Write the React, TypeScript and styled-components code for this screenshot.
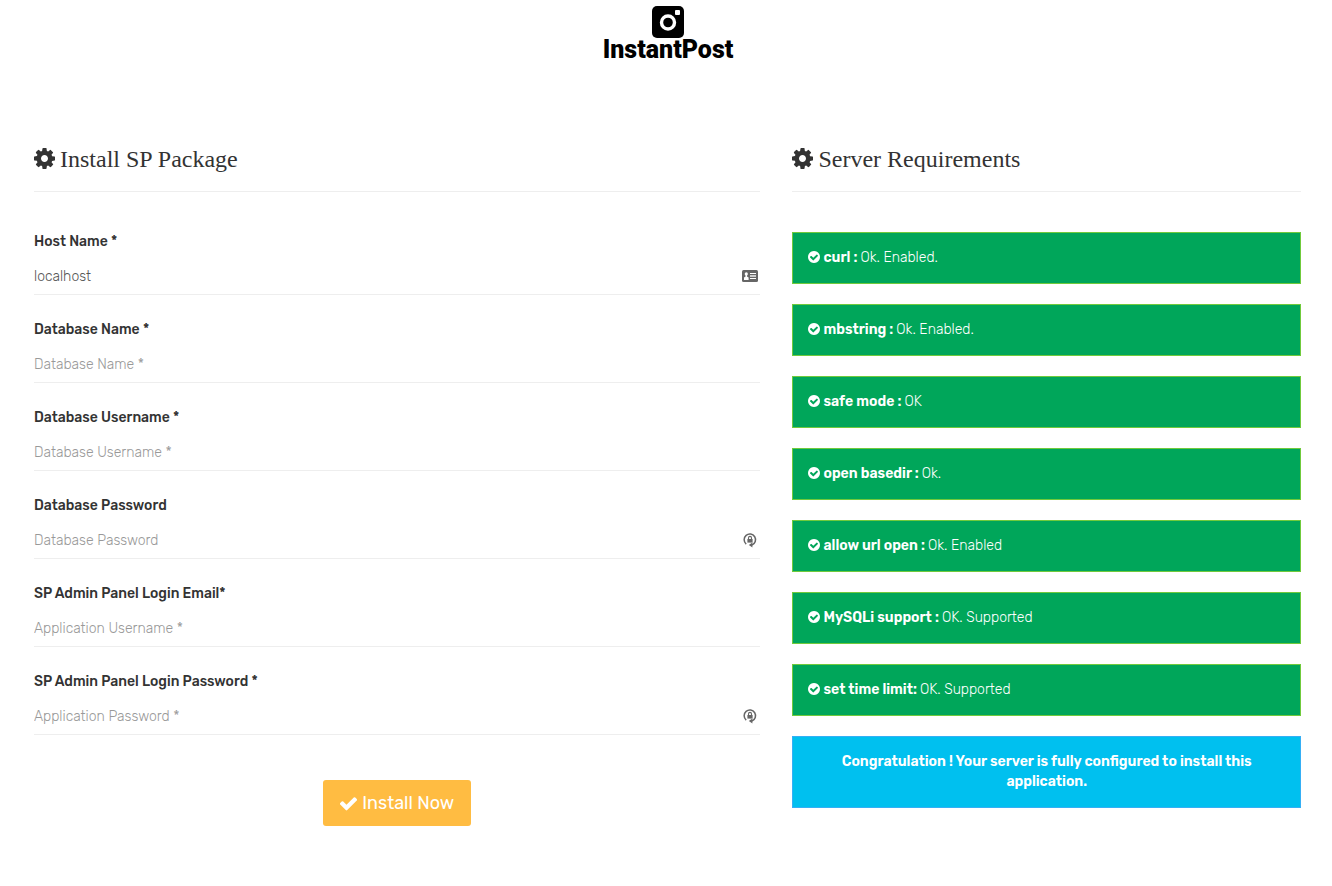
import React from "react";
import styled, { createGlobalStyle } from "styled-components";

const GlobalStyle = createGlobalStyle`
  *, *::before, *::after { box-sizing: border-box; }
  body {
    margin: 0;
    background: #fff;
    color: #333;
    font-family: Rubik, Roboto, sans-serif;
    font-size: 14px;
    font-weight: 300;
    line-height: 20px;
  }
`;

const Brand = styled.header`
  display: flex;
  flex-direction: column;
  align-items: center;
  padding: 6px 0 0 4px;
  color: #000;
`;

const BrandName = styled.div`
  font-family: Roboto, sans-serif;
  font-size: 25px;
  font-weight: 900;
  line-height: 24px;
`;

const Columns = styled.main`
  display: grid;
  grid-template-columns: minmax(0, 10fr) minmax(0, 7fr);
  gap: 32px;
  align-items: start;
  padding: 82px 31px 40px 34px;
`;

const Title = styled.h2`
  display: flex;
  align-items: flex-start;
  gap: 5px;
  height: 48px;
  margin: 0;
  border-bottom: 1px solid #eee;
  font-family: "Liberation Serif", serif;
  font-size: 24px;
  font-weight: 400;
  line-height: 30px;
  svg { margin-top: 4px; }
`;

const Form = styled.form`
  display: flex;
  flex-direction: column;
  gap: 24px;
  padding-top: 39px;
`;

const Field = styled.div`
  display: flex;
  flex-direction: column;
  gap: 5px;
`;

const Label = styled.label`
  font-weight: 500;
  line-height: 22px;
`;

const InputRow = styled.div`
  display: flex;
  align-items: center;
  height: 37px;
  padding-right: 2px;
  border-bottom: 1px solid #eee;
  color: #666;
`;

const Input = styled.input`
  flex: 1;
  min-width: 0;
  height: 36px;
  padding: 0;
  border: 0;
  outline: 0;
  background: transparent;
  color: #555;
  font: inherit;
  &::placeholder { color: #999; opacity: 1; }
`;

const Submit = styled.button`
  display: flex;
  align-items: center;
  justify-content: center;
  gap: 5px;
  align-self: center;
  height: 46px;
  margin-top: 21px;
  padding: 0 17px;
  border: 0;
  border-radius: 3px;
  background: #ffbc42;
  color: #fff;
  font-family: inherit;
  font-size: 18px;
  font-weight: 400;
`;

const Notices = styled.div`
  display: flex;
  flex-direction: column;
  gap: 20px;
  padding-top: 40px;
`;

const Notice = styled.div<{ $info?: boolean }>`
  padding: 15px ${(p) => (p.$info ? 32 : 15)}px;
  border: 1px solid ${(p) => (p.$info ? "#35aff5" : "#70ca3c")};
  background: ${(p) => (p.$info ? "#00c0ef" : "#00a65a")};
  color: #fff;
  text-align: ${(p) => (p.$info ? "center" : "left")};
`;

const Strong = styled.strong`
  font-weight: 600;
`;

const NoticeLine = styled.div`
  display: flex;
  align-items: center;
  gap: 3px;
  svg { margin-bottom: 2px; }
`;

const glyphs = {
  cog: "M1152 896q0-106-75-181t-181-75-181 75-75 181 75 181 181 75 181-75 75-181zm512-109v222q0 12-8 23t-20 13l-185 28q-19 54-39 91 35 50 107 138 10 12 10 25t-9 23q-27 37-99 108t-94 71q-12 0-26-9l-138-108q-44 23-91 38-16 136-29 186-7 28-36 28h-222q-14 0-24.5-8.5t-11.5-21.5l-28-184q-49-16-90-37l-141 107q-10 9-25 9-14 0-25-11-126-114-165-168-7-10-7-23 0-12 8-23 15-21 51-66.5t54-70.5q-27-50-41-99l-183-27q-13-2-21-12.5t-8-23.5v-222q0-12 8-23t19-13l186-28q14-46 39-92-40-57-107-138-10-12-10-24 0-10 9-23 26-36 98.5-107.5t94.5-71.5q13 0 26 10l138 107q44-23 91-38 16-136 29-186 7-28 36-28h222q14 0 24.5 8.5t11.5 21.5l28 184q49 16 90 37l142-107q9-9 24-9 13 0 25 10 129 119 165 170 7 8 7 22 0 12-8 23-15 21-51 66.5t-54 70.5q26 50 41 98l183 28q13 2 21 12.5t8 23.5z",
  check:
    "M1671 566q0 40-28 68l-724 724-136 136q-28 28-68 28t-68-28l-136-136-362-362q-28-28-28-68t28-68l136-136q28-28 68-28t68 28l294 295 656-657q28-28 68-28t68 28l136 136q28 28 28 68z",
  checkCircle:
    "M1412 734q0-28-18-46l-91-90q-19-19-45-19t-45 19l-408 407-226-226q-19-19-45-19t-45 19l-91 90q-18 18-18 46 0 27 18 45l362 362q19 19 45 19 27 0 46-19l543-543q18-18 18-45zm252 162q0 209-103 385.5t-279.5 279.5-385.5 103-385.5-103-279.5-279.5-103-385.5 103-385.5 279.5-279.5 385.5-103 385.5 103 279.5 279.5 103 385.5z",
};

function Glyph({ name, size }: { name: keyof typeof glyphs; size: number }) {
  return (
    <svg width={size} height={size} viewBox="128 128 1536 1536" fill="currentColor" aria-hidden="true">
      <path d={glyphs[name]} />
    </svg>
  );
}

function CameraLogo() {
  return (
    <svg width="32" height="32" viewBox="0 0 32 32" aria-hidden="true">
      <rect width="32" height="32" rx="5" fill="#000" />
      <circle cx="16" cy="16.5" r="6.5" fill="none" stroke="#fff" strokeWidth="3.4" />
      <rect x="23" y="4" width="5" height="5" rx="1" fill="#fff" />
    </svg>
  );
}

function CardIcon() {
  return (
    <svg width="16" height="12" viewBox="0 0 16 12" aria-hidden="true">
      <rect width="16" height="12" rx="1.5" fill="#666" />
      <circle cx="4.3" cy="3.9" r="1.6" fill="#fff" />
      <path d="M3.6 5h1.4v1.6l1.6 1v2.4H2V7.6l1.6-1z" fill="#fff" />
      <path d="M8 3.5h6M8 8.5h6" stroke="#fff" />
      <path d="M8 6h6" stroke="#ccc" strokeWidth="2" />
    </svg>
  );
}

function LockIcon() {
  return (
    <svg width="16" height="16" viewBox="0 0 16 16" fill="none" stroke="#666" aria-hidden="true">
      <path d="M4.2 12.1A5.7 5.7 0 1 1 10 13" strokeWidth="1.5" />
      <path d="M10.4 10.4v5L6.8 13z" fill="#666" stroke="none" />
      <rect x="5.4" y="7" width="5.2" height="3.6" fill="#666" stroke="none" />
      <path d="M6.5 7V5.9a1.5 1.5 0 0 1 3 0V7" strokeWidth="1.1" />
    </svg>
  );
}

const fields = [
  { id: "host", label: "Host Name *", value: "localhost", icon: <CardIcon /> },
  { id: "db", label: "Database Name *", hint: "Database Name *" },
  { id: "dbuser", label: "Database Username *", hint: "Database Username *" },
  { id: "dbpass", label: "Database Password", hint: "Database Password", type: "password", icon: <LockIcon /> },
  { id: "email", label: "SP Admin Panel Login Email*", hint: "Application Username *" },
  { id: "pass", label: "SP Admin Panel Login Password *", hint: "Application Password *", type: "password", icon: <LockIcon /> },
];

const checks = [
  ["curl :", "Ok. Enabled."],
  ["mbstring :", "Ok. Enabled."],
  ["safe mode :", "OK"],
  ["open basedir :", "Ok."],
  ["allow url open :", "Ok. Enabled"],
  ["MySQLi support :", "OK. Supported"],
  ["set time limit:", "OK. Supported"],
];

export default function App() {
  return (
    <>
      <GlobalStyle />
      <Brand>
        <CameraLogo />
        <BrandName>InstantPost</BrandName>
      </Brand>
      <Columns>
        <section>
          <Title><Glyph name="cog" size={21} />Install SP Package</Title>
          <Form onSubmit={(e) => e.preventDefault()}>
            {fields.map((f) => (
              <Field key={f.id}>
                <Label htmlFor={f.id}>{f.label}</Label>
                <InputRow>
                  <Input id={f.id} type={f.type ?? "text"} defaultValue={f.value} placeholder={f.hint} />
                  {f.icon}
                </InputRow>
              </Field>
            ))}
            <Submit type="submit"><Glyph name="check" size={17} />Install Now</Submit>
          </Form>
        </section>
        <section>
          <Title><Glyph name="cog" size={21} />Server Requirements</Title>
          <Notices>
            {checks.map(([name, result]) => (
              <Notice key={name}>
                <NoticeLine>
                  <Glyph name="checkCircle" size={12} />
                  <Strong>{name}</Strong>
                  <span>{result}</span>
                </NoticeLine>
              </Notice>
            ))}
            <Notice $info>
              <Strong>Congratulation ! Your server is fully configured to install this application.</Strong>
            </Notice>
          </Notices>
        </section>
      </Columns>
    </>
  );
}
